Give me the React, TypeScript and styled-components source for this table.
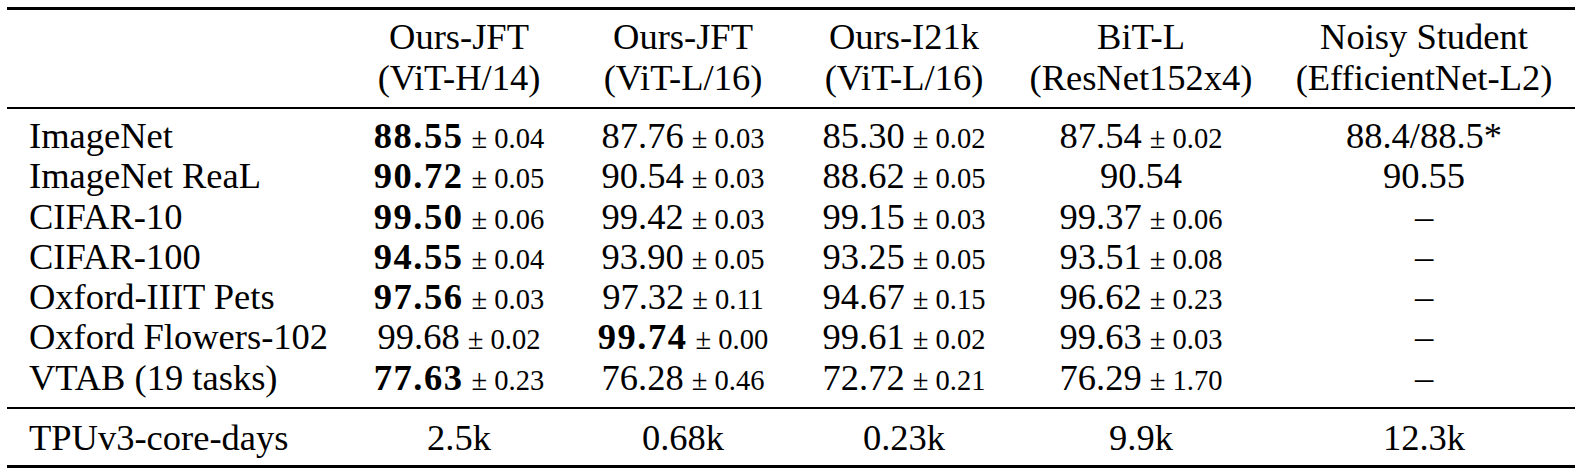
import React from "react";
import styled, { createGlobalStyle } from "styled-components";

interface IScore {
  value: string;
  err?: string;
  bold?: boolean;
}

interface IRow {
  name: string;
  scores: IScore[];
}

const columns = [
  { title: "Ours-JFT", sub: "(ViT-H/14)" },
  { title: "Ours-JFT", sub: "(ViT-L/16)" },
  { title: "Ours-I21k", sub: "(ViT-L/16)" },
  { title: "BiT-L", sub: "(ResNet152x4)" },
  { title: "Noisy Student", sub: "(EfficientNet-L2)" },
];

const widths = [344, 216, 232, 210, 264, 302];

const rows: IRow[] = [
  {
    name: "ImageNet",
    scores: [
      { value: "88.55", err: "0.04", bold: true },
      { value: "87.76", err: "0.03" },
      { value: "85.30", err: "0.02" },
      { value: "87.54", err: "0.02" },
      { value: "88.4/88.5*" },
    ],
  },
  {
    name: "ImageNet ReaL",
    scores: [
      { value: "90.72", err: "0.05", bold: true },
      { value: "90.54", err: "0.03" },
      { value: "88.62", err: "0.05" },
      { value: "90.54" },
      { value: "90.55" },
    ],
  },
  {
    name: "CIFAR-10",
    scores: [
      { value: "99.50", err: "0.06", bold: true },
      { value: "99.42", err: "0.03" },
      { value: "99.15", err: "0.03" },
      { value: "99.37", err: "0.06" },
      { value: "–" },
    ],
  },
  {
    name: "CIFAR-100",
    scores: [
      { value: "94.55", err: "0.04", bold: true },
      { value: "93.90", err: "0.05" },
      { value: "93.25", err: "0.05" },
      { value: "93.51", err: "0.08" },
      { value: "–" },
    ],
  },
  {
    name: "Oxford-IIIT Pets",
    scores: [
      { value: "97.56", err: "0.03", bold: true },
      { value: "97.32", err: "0.11" },
      { value: "94.67", err: "0.15" },
      { value: "96.62", err: "0.23" },
      { value: "–" },
    ],
  },
  {
    name: "Oxford Flowers-102",
    scores: [
      { value: "99.68", err: "0.02" },
      { value: "99.74", err: "0.00", bold: true },
      { value: "99.61", err: "0.02" },
      { value: "99.63", err: "0.03" },
      { value: "–" },
    ],
  },
  {
    name: "VTAB (19 tasks)",
    scores: [
      { value: "77.63", err: "0.23", bold: true },
      { value: "76.28", err: "0.46" },
      { value: "72.72", err: "0.21" },
      { value: "76.29", err: "1.70" },
      { value: "–" },
    ],
  },
];

const compute = ["2.5k", "0.68k", "0.23k", "9.9k", "12.3k"];

const App: React.FC = () => {
  return (
    <Page>
      <GlobalStyle />
      <Table>
        <colgroup>
          {widths.map((w, i) => (
            <col key={i} style={{ width: w }} />
          ))}
        </colgroup>
        <Head>
          <tr>
            <HeadCell />
            {columns.map((c, i) => (
              <HeadCell key={i}>
                {c.title}
                <br />
                {c.sub}
              </HeadCell>
            ))}
          </tr>
        </Head>
        <Body>
          {rows.map((row, r) => (
            <Row
              key={row.name}
              $padTop={r === 0 ? 7 : 0}
              $padBottom={r === rows.length - 1 ? 9 : 0}
            >
              <Label>{row.name}</Label>
              {row.scores.map((s, i) => (
                <Value key={i}>
                  <Main $bold={s.bold}>{s.value}</Main>
                  {s.err && <Err>±&nbsp;{s.err}</Err>}
                </Value>
              ))}
            </Row>
          ))}
        </Body>
        <Body $ruled>
          <Row $padTop={9} $padBottom={7} $height={40}>
            <Label>TPUv3-core-days</Label>
            {compute.map((c, i) => (
              <Value key={i}>{c}</Value>
            ))}
          </Row>
        </Body>
      </Table>
    </Page>
  );
};

const GlobalStyle = createGlobalStyle`
  html, body {
    margin: 0;
    padding: 0;
    background: #fff;
  }
`;

const Page = styled.div`
  padding: 7px 8px 6px 7px;
`;

const Table = styled.table`
  width: 1568px;
  border-collapse: collapse;
  table-layout: fixed;
  font-family: "Liberation Serif", "Times New Roman", serif;
  font-size: 36.5px;
  color: #000;
  border-top: 3px solid #000;
  border-bottom: 3px solid #000;
`;

const Head = styled.thead`
  border-bottom: 2px solid #000;
`;

const Body = styled.tbody<{ $ruled?: boolean }>`
  border-top: ${(p) => (p.$ruled ? "2px solid #000" : "none")};
`;

const HeadCell = styled.th`
  font-weight: normal;
  text-align: center;
  line-height: 41px;
  padding: 6px 0 9px;
  white-space: nowrap;
`;

const Row = styled.tr<{ $padTop?: number; $padBottom?: number; $height?: number }>`
  > td {
    padding-top: ${(p) => p.$padTop ?? 0}px;
    padding-bottom: ${(p) => p.$padBottom ?? 0}px;
    line-height: ${(p) => p.$height ?? 40.3}px;
  }
`;

const Label = styled.td`
  text-align: left;
  padding-left: 22px;
  white-space: nowrap;
`;

const Value = styled.td`
  text-align: center;
  white-space: nowrap;
`;

const Main = styled.span<{ $bold?: boolean }>`
  font-weight: ${(p) => (p.$bold ? 700 : 400)};
  letter-spacing: ${(p) => (p.$bold ? "1.5px" : "0")};
`;

const Err = styled.span`
  font-size: 28.5px;
  line-height: 1;
  margin-left: 8px;
`;

export default App;
